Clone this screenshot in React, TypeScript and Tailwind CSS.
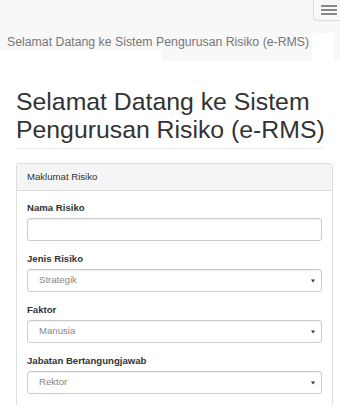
import React from 'react';

const fields = [
  { label: 'Jenis Risiko', value: 'Strategik' },
  { label: 'Faktor', value: 'Manusia' },
  { label: 'Jabatan Bertangungjawab', value: 'Rektor' },
];

function SelectBox({ value }: { value: string }) {
  return (
    <div className="flex h-[23px] items-center justify-between rounded-[3px] border border-[#ccc] bg-white pl-[11px] pr-[6px] shadow-[inset_0_1px_1px_rgba(0,0,0,0.075)]">
      <span className="text-[9.6px] text-[#888]">{value}</span>
      <svg className="h-[4px] w-[4px]" viewBox="0 0 4 4">
        <path d="M0 0.5 L4 0.5 L2 3.5 Z" fill="#333" />
      </svg>
    </div>
  );
}

export default function App() {
  return (
    <div className="h-[405px] w-[340px] overflow-hidden bg-white font-['Liberation_Sans',Arial,sans-serif]">
      {/* navbar */}
      <div className="h-[61px] bg-[#f8f8f8]">
        <div className="flex h-[33px] justify-end">
          <div className="mr-[-6px] flex h-[21px] w-[33px] flex-col gap-[2.5px] rounded-bl-[4px] border-b border-l border-[#ddd] pl-[7px] pt-[5px]">
            <span className="h-[1.5px] w-[16px] bg-[#888]" />
            <span className="h-[1.5px] w-[16px] bg-[#888]" />
            <span className="h-[1.5px] w-[16px] bg-[#888]" />
          </div>
        </div>
        <div className="flex h-[28px]">
          <div className="flex w-[312px] flex-col">
            <div className="h-[17px] whitespace-nowrap pl-[7px] text-[12.3px] leading-[19px] text-[#777]">
              Selamat Datang ke Sistem Pengurusan Risiko (e-RMS)
            </div>
            <div className="h-[11px] w-[162px] bg-white" />
          </div>
          <div className="w-[22px] bg-white" />
        </div>
      </div>

      <div className="px-[16px]">
        {/* page header */}
        <div className="mt-[27px] border-b border-[#eee] pb-[5px]">
          <h1 className="whitespace-nowrap text-[24.8px] leading-[27.5px] text-[#333]">
            Selamat Datang ke Sistem
            <br />
            Pengurusan Risiko (e-RMS)
          </h1>
        </div>

        {/* panel */}
        <div className="mt-[14px] w-[317px] rounded-[3px] border border-[#ddd]">
          <div className="flex h-[27px] items-center border-b border-[#ddd] bg-[#f5f5f5] px-[10px] text-[9.6px] text-[#333]">
            Maklumat Risiko
          </div>
          <div className="px-[10px] pt-[10px]">
            <div className="mb-[11px]">
              <label className="mb-[3px] block text-[9.6px] font-bold leading-[14px] text-[#333]">Nama Risiko</label>
              <input
                type="text"
                className="block h-[23px] w-full rounded-[3px] border border-[#ccc] bg-white px-[11px] text-[9.6px] shadow-[inset_0_1px_1px_rgba(0,0,0,0.075)] outline-none"
              />
            </div>
            {fields.map((f) => (
              <div key={f.label} className="mb-[11px]">
                <label className="mb-[3px] block text-[9.6px] font-bold leading-[14px] text-[#333]">{f.label}</label>
                <SelectBox value={f.value} />
              </div>
            ))}
          </div>
        </div>
      </div>
    </div>
  );
}
